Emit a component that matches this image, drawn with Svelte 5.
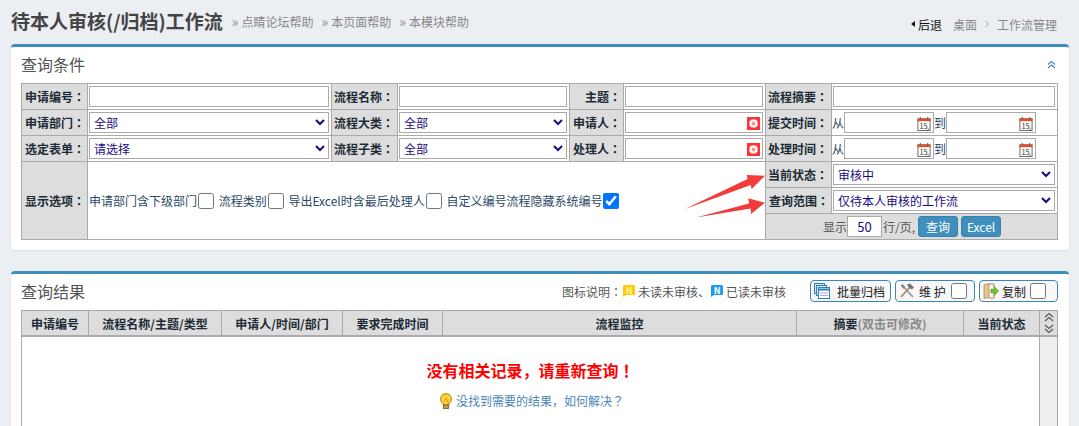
<script>
  const cols = ['申请编号', '流程名称/主题/类型', '申请人/时间/部门', '要求完成时间', '流程监控'];
</script>

{#snippet lab(text)}{text}<span class="c">：</span>{/snippet}

{#snippet cal()}
  <svg class="cal" viewBox="0 0 15 15" aria-hidden="true">
    <rect x="1" y="2" width="13" height="12.5" fill="#fff" stroke="#666"/>
    <rect x="0.5" y="1.5" width="14" height="3" fill="#e8502c"/>
    <path d="M3.5 0v3M11.5 0v3" stroke="#666" stroke-width="1.2"/>
    <text x="7" y="12.4" font-size="8" text-anchor="middle" fill="#333">15</text>
    <path d="M10 14l4-4v4z" fill="#bbb"/>
  </svg>
{/snippet}

{#snippet dates()}
  <div class="dates">
    <span>从</span><span class="date"><input type="text" />{@render cal()}</span>
    <span>到</span><span class="date"><input type="text" />{@render cal()}</span>
  </div>
{/snippet}

{#snippet person()}
  <span class="person">
    <input type="text" />
    <svg class="clear" viewBox="0 0 13 13" aria-hidden="true">
      <rect width="13" height="13" fill="#f33"/>
      <path d="M4.500 2.500h4l2 2v4l-2 2h-4l-2-2v-4z" fill="#fff"/>
      <path d="M5 5l3 3M8 5l-3 3" stroke="#f88" stroke-width="1.600"/>
    </svg>
  </span>
{/snippet}

<div class="page">
  <header class="top">
    <div class="heading">
      <h1>待本人审核(/归档)工作流</h1>
      <nav class="help">
        <a><i>»</i>点睛论坛帮助</a>
        <a><i>»</i>本页面帮助</a>
        <a><i>»</i>本模块帮助</a>
      </nav>
    </div>
    <div class="crumbs">
      <span class="back"><b class="tri"></b>后退</span>
      <span>桌面</span>
      <svg class="sep" viewBox="0 0 6 8" aria-hidden="true"><path d="M1.500 1l3 3-3 3" fill="none" stroke="#aaa"/></svg>
      <span>工作流管理</span>
    </div>
  </header>

  <section class="panel query">
    <div class="ptitle">
      <h2>查询条件</h2>
      <svg class="collapse" viewBox="0 0 9 9" aria-hidden="true">
        <path d="M1 4.500l3.500-3 3.500 3M1 8l3.500-3 3.500 3" fill="none" stroke="#4a7fb5" stroke-width="1.100"/>
      </svg>
    </div>

    <div class="qwrap">
      <table class="qt">
        <colgroup>
          <col style="width:66px" /><col style="width:244px" /><col style="width:66px" /><col style="width:172px" />
          <col style="width:54px" /><col style="width:142px" /><col style="width:66px" /><col />
        </colgroup>
        <tbody>
          <tr>
            <th>{@render lab('申请编号')}</th><td><input type="text" /></td>
            <th>{@render lab('流程名称')}</th><td><input type="text" /></td>
            <th class="r">{@render lab('主题')}</th><td><input type="text" /></td>
            <th>{@render lab('流程摘要')}</th><td><input type="text" /></td>
          </tr>
          <tr>
            <th>{@render lab('申请部门')}</th><td><select><option>全部</option></select></td>
            <th>{@render lab('流程大类')}</th><td><select><option>全部</option></select></td>
            <th class="r">{@render lab('申请人')}</th><td>{@render person()}</td>
            <th>{@render lab('提交时间')}</th><td>{@render dates()}</td>
          </tr>
          <tr>
            <th>{@render lab('选定表单')}</th><td><select><option>请选择</option></select></td>
            <th>{@render lab('流程子类')}</th><td><select><option>全部</option></select></td>
            <th class="r">{@render lab('处理人')}</th><td>{@render person()}</td>
            <th>{@render lab('处理时间')}</th><td>{@render dates()}</td>
          </tr>
          <tr>
            <th rowspan="3">{@render lab('显示选项')}</th>
            <td colspan="5" rowspan="3" class="opts">
              <label>申请部门含下级部门<input type="checkbox" /></label>
              <label>流程类别<input type="checkbox" /></label>
              <label>导出Excel时含最后处理人<input type="checkbox" /></label>
              <label>自定义编号流程隐藏系统编号<input type="checkbox" checked /></label>
            </td>
            <th>{@render lab('当前状态')}</th><td><select><option>审核中</option></select></td>
          </tr>
          <tr>
            <th>{@render lab('查询范围')}</th><td><select><option>仅待本人审核的工作流</option></select></td>
          </tr>
          <tr>
            <td colspan="2" class="pager">
              <div class="pagerin">
                <span>显示</span><input class="num" type="text" value="50" /><span class="unit">行/页,</span>
                <button class="b1">查询</button><button class="b2">Excel</button>
              </div>
            </td>
          </tr>
        </tbody>
      </table>
      <svg class="arrows" viewBox="0 0 90 55" aria-hidden="true">
        <path d="M-1 44L61.500 14 60.700 10 79 10.700 65.700 24 64.700 20z" fill="#f23c3c"/>
        <path d="M10 52.500L63 38.500 62.300 33.300 79 37.700 65 49 64.700 43.500z" fill="#f23c3c"/>
      </svg>
    </div>
  </section>

  <section class="panel result">
    <div class="ptitle rtitle">
      <h2>查询结果</h2>
      <div class="legend">
        <span>图标说明<span class="c">：</span></span>
        <svg class="note" viewBox="0 0 12 12" aria-hidden="true"><path d="M1.500 0h9A1.500 1.500 0 0 1 12 1.500V9a1 1 0 0 1-1 1H3l-3 2V1.500A1.500 1.500 0 0 1 1.500 0z" fill="#ffcc00"/><text x="6" y="8.500" font-size="9" font-weight="700" text-anchor="middle" fill="#fff3b0">N</text></svg>
        <span>未读未审核、</span>
        <svg class="note n2" viewBox="0 0 12 12" aria-hidden="true"><path d="M1.500 0h9A1.500 1.500 0 0 1 12 1.500V9a1 1 0 0 1-1 1H3l-3 2V1.500A1.500 1.500 0 0 1 1.500 0z" fill="#1a9cf0"/><text x="6" y="8.500" font-size="9" font-weight="700" text-anchor="middle" fill="#fff">N</text></svg>
        <span>已读未审核</span>
      </div>
      <div class="tools">
        <button class="tool t1">
          <svg viewBox="0 0 16 16" width="16" height="16" aria-hidden="true">
            <rect x="0.500" y="0.500" width="10" height="10" fill="#cfe4f5" stroke="#2e7fb8"/>
            <rect x="2.500" y="2.500" width="10" height="10" fill="#dcecf8" stroke="#2e7fb8"/>
            <rect x="4.500" y="4.500" width="11" height="11" fill="#fff" stroke="#2e7fb8"/>
            <path d="M5 6.500h10" stroke="#2e7fb8" stroke-width="2"/>
            <path d="M6 10h8M6 12.500h8" stroke="#aac" />
          </svg>
          <span>批量归档</span>
        </button>
        <button class="tool t2">
          <svg viewBox="0 0 16 16" width="16" height="16" aria-hidden="true">
            <path d="M2 14L11 4" stroke="#b08850" stroke-width="1.800"/>
            <path d="M8 1.500l3-1 4 4-2 2-3-1.500z" fill="#777"/>
            <path d="M14 14L6 5.500" stroke="#999" stroke-width="1.800"/>
            <path d="M1.500 2.500L3.500 1 6 3.500 6.500 6 4 5.500z" fill="#888"/>
          </svg>
          <span class="sp">维 护</span>
          <input type="checkbox" />
        </button>
        <button class="tool t3">
          <svg viewBox="0 0 16 16" width="16" height="16" aria-hidden="true">
            <path d="M1 2l5-1.500v14L1 15.500z" fill="#e6c98a" stroke="#a98b52" stroke-width=".8"/>
            <path d="M6 1h5v3M6 15h5v-3" fill="none" stroke="#a98b52"/>
            <path d="M8 6.300h3V3.500L15.500 8 11 12.500V9.700H8z" fill="#7cc02c" stroke="#4c8a14" stroke-width=".7"/>
          </svg>
          <span>复制</span>
          <input type="checkbox" />
        </button>
      </div>
    </div>

    <div class="grid">
      <div class="ghead">
        {#each cols as c}<div class="gc">{c}</div>{/each}
        <div class="gc">摘要<em>(双击可修改)</em></div>
        <div class="gc">当前状态</div>
        <div class="gc scrollc">
          <svg viewBox="0 0 10 22" width="10" height="22" aria-hidden="true">
            <path d="M1 5l4-3.500L9 5M1 9l4-3.500L9 9M1 13l4 3.500L9 13M1 17l4 3.500L9 17" fill="none" stroke="#555" stroke-width="1.100"/>
          </svg>
        </div>
      </div>
      <div class="gbody">
        <div class="empty">
          <p class="none">没有相关记录，请重新查询<span class="c">！</span></p>
          <p class="tip">
            <svg viewBox="0 0 12 16" width="12" height="16" aria-hidden="true">
              <path d="M6 .5a5.500 5.500 0 0 0-3 10.100V12h6v-1.400A5.500 5.500 0 0 0 6 .5z" fill="#ffd23c" stroke="#b8860b"/>
              <path d="M4 8.500L6 5l2 3.500V11" fill="none" stroke="#d98a00" stroke-width=".8"/>
              <rect x="3.500" y="12" width="5" height="3.500" fill="#c7a24a" stroke="#6b5514" stroke-width=".8"/>
            </svg>
            <a>没找到需要的结果，如何解决<span class="c">？</span></a>
          </p>
        </div>
        <div class="rail"></div>
      </div>
    </div>
  </section>
</div>

<style>
  :global(body) {
    margin: 0;
    background: #ebeef3;
    overflow: hidden;
  }
  .page {
    height: 426px;
    overflow: hidden;
    padding: 0 10px 0 11px;
    font-family: "Noto Sans CJK SC", "Noto Sans", sans-serif;
    font-size: 12px;
    color: #333;
  }
  .c {
    font-family: "Noto Sans CJK TC", sans-serif;
  }
  .top {
    height: 44px;
    display: flex;
    justify-content: space-between;
  }
  .heading {
    display: flex;
    align-items: center;
    height: 42px;
  }
  h1 {
    margin: 0;
    font-size: 19px;
    font-weight: 700;
    line-height: 24px;
    color: #444;
  }
  .help {
    display: flex;
    margin-left: 9px;
    gap: 8px;
    color: #888;
  }
  .help i {
    font-style: normal;
    font-size: 14px;
    line-height: 17px;
    margin-right: 3px;
  }
  .crumbs {
    display: flex;
    align-items: center;
    gap: 11px;
    height: 48px;
    color: #888;
    padding-right: 12px;
  }
  .back {
    color: #111;
    display: flex;
    align-items: center;
    gap: 3px;
  }
  .tri {
    width: 0;
    height: 0;
    border: 3.500px solid transparent;
    border-right: 4px solid #111;
    border-left: 0;
  }
  .sep {
    width: 6px;
    height: 8px;
    margin: 0 -4px;
  }
  .panel {
    background: #fff;
    border-top: 3px solid #3b8dbb;
    border-radius: 4px 4px 3px 3px;
    box-shadow: 0 1px 2px rgba(0, 0, 0, .08);
    padding: 0 10px;
  }
  .query {
    height: 203px;
  }
  .result {
    margin-top: 21px;
    height: 155px;
  }
  .ptitle {
    height: 36px;
    box-sizing: border-box;
    padding-bottom: 2px;
    display: flex;
    align-items: center;
    justify-content: space-between;
  }
  h2 {
    margin: 0;
    font-size: 16px;
    font-weight: 400;
    color: #555;
  }
  .collapse {
    width: 9px;
    height: 9px;
    margin-right: 3px;
  }
  .qwrap {
    position: relative;
    width: 1037px;
  }
  .qt {
    border-collapse: collapse;
    table-layout: fixed;
    width: 1037px;
  }
  .qt th, .qt td {
    height: 25px;
    padding: 0 2px 0 1px;
    border: 1px solid #aaa;
    box-sizing: content-box;
    font-size: 12px;
  }
  .qt th {
    padding: 0 2px;
    background: #ddd;
    color: #1c2b36;
    text-align: left;
    font-weight: 700;
    white-space: nowrap;
  }
  .qt th:first-child {
    padding-left: 3px;
  }
  .qt th.r {
    text-align: right;
  }
  input[type="text"], select {
    display: block;
    box-sizing: border-box;
    width: 100%;
    height: 21px;
    border: 1px solid #aaa;
    background: #fff;
    padding: 0 5px;
    margin: 0;
    font: 12px "Noto Sans CJK SC", sans-serif;
    color: #1a0a80;
    border-radius: 0;
    outline: 0;
  }
  select {
    padding: 0;
  }
  .person, .date {
    position: relative;
    display: block;
  }
  .clear {
    position: absolute;
    right: 3px;
    top: 5px;
    width: 13px;
    height: 13px;
  }
  .dates {
    display: grid;
    grid-template-columns: 12px 90px 12px 90px;
    align-items: center;
    color: #2a4466;
    margin-left: -1px;
  }
  .cal {
    position: absolute;
    right: 3px;
    top: 5px;
    width: 14px;
    height: 14px;
  }
  .qt .opts {
    padding: 0 0 0 1px;
    white-space: nowrap;
    color: #2a4a66;
  }
  .opts label {
    display: inline-flex;
    align-items: center;
    margin-right: 2px;
  }
  input[type="checkbox"] {
    width: 16px;
    height: 16px;
    margin: 0 0 0 1px;
    flex: none;
  }
  .pager {
    background: #ddd;
  }
  .pagerin {
    display: flex;
    align-items: center;
    padding-left: 56px;
    color: #555;
  }
  input.num {
    width: 35px;
    padding: 0;
    text-align: center;
    font-size: 13px;
  }
  .unit {
    margin: 0 3px 0 1px;
  }
  .b1, .b2 {
    width: 40px;
    height: 21px;
    padding: 0;
    border: 1px solid #3684ae;
    border-radius: 3px;
    background: #3f8fbd;
    color: #fff;
    font: 12px "Noto Sans CJK SC", sans-serif;
  }
  .b2 {
    margin-left: 3px;
  }
  .arrows {
    position: absolute;
    left: 665px;
    top: 82px;
    width: 90px;
    height: 55px;
    overflow: visible;
    pointer-events: none;
  }
  .rtitle {
    padding-right: 1px;
  }
  .legend {
    display: flex;
    align-items: center;
    margin-left: auto;
    color: #555;
    margin-right: 24px;
  }
  .note {
    width: 12px;
    height: 12px;
    margin: 0 3px 0 1px;
  }
  .tools {
    display: flex;
    gap: 4px;
  }
  .tool {
    display: flex;
    align-items: center;
    height: 22px;
    padding: 0 3px;
    border: 1px solid #3b86b4;
    border-radius: 4px;
    background: #f7f7f7;
    color: #222;
    font: 12px "Noto Sans CJK SC", sans-serif;
    box-sizing: border-box;
  }
  .t1 { width: 81px; gap: 7px; }
  .t2 { width: 80px; gap: 4px; }
  .t3 { width: 79px; gap: 3px; }
  .sp {
    white-space: pre;
  }
  .grid {
    width: 1037px;
    box-sizing: border-box;
    border: 1px solid #aaa;
    border-bottom: 0;
    height: 120px;
  }
  .ghead {
    display: grid;
    grid-template-columns: 67px 133px 121px 100px 354px 167px 76px 1fr;
    height: 24px;
    background: #ddd;
    border-bottom: 2px solid #aaa;
    box-sizing: content-box;
  }
  .gc {
    display: flex;
    align-items: center;
    justify-content: center;
    font-weight: 700;
    color: #1c2b36;
    border-right: 1px solid #aaa;
    white-space: nowrap;
  }
  .gc em {
    font-style: normal;
    color: #888;
  }
  .scrollc {
    border-right: 0;
  }
  .gbody {
    display: flex;
    height: 92px;
  }
  .empty {
    flex: 1;
    text-align: center;
  }
  .rail {
    width: 17px;
    background: #eee;
    border-left: 1px solid #aaa;
  }
  .none {
    margin: 21px 0 0;
    font-size: 16px;
    line-height: 24px;
    font-weight: 700;
    color: #f00;
  }
  .tip {
    margin: 11px 0 0;
    padding-left: 3px;
    display: flex;
    justify-content: center;
    align-items: center;
    gap: 4px;
    color: #4a86b8;
    line-height: 16px;
  }
</style>
